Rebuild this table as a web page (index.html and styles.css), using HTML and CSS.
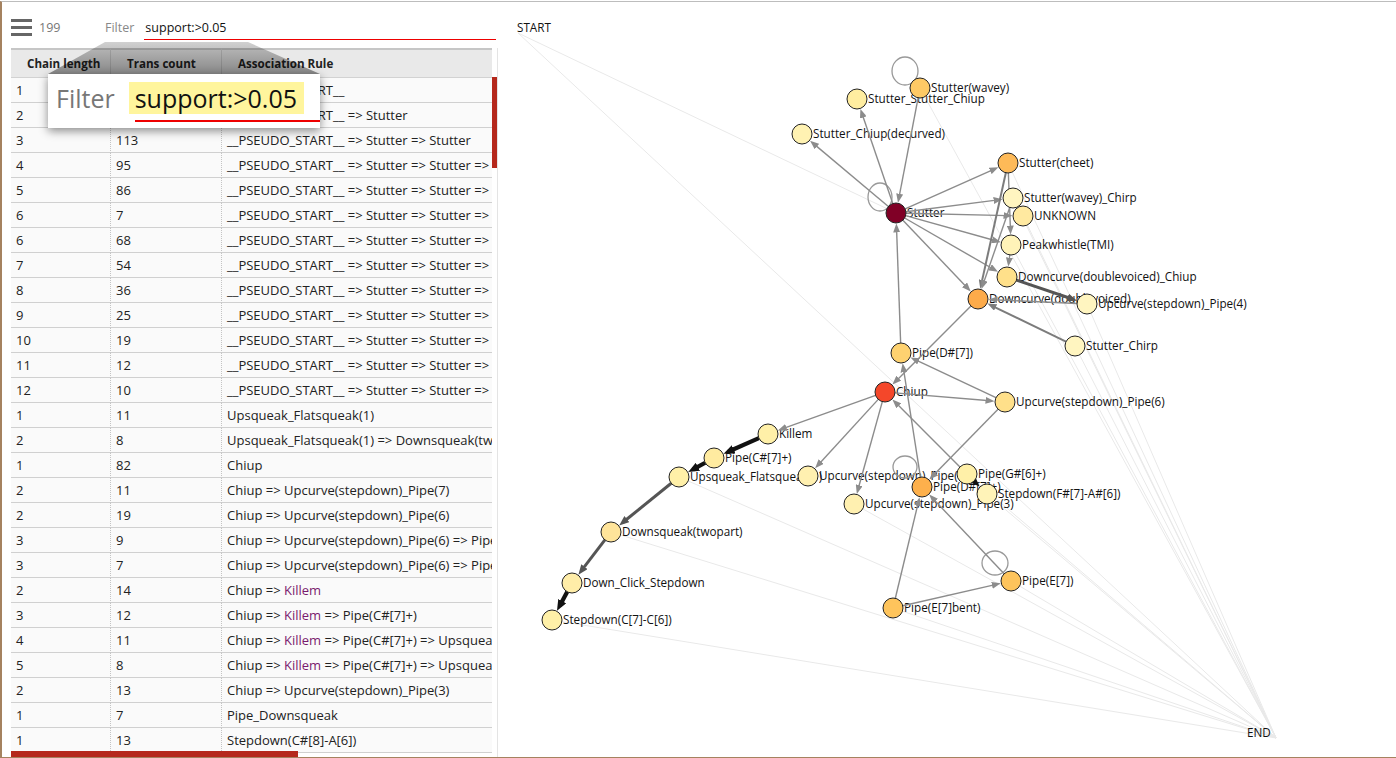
FILE: index.html
```html
<!DOCTYPE html>
<html>
<head>
<meta charset="utf-8">
<title>Association rules</title>
<link rel="stylesheet" href="styles.css">
</head>
<body>
<div class="app">
  <aside class="panel">
    <div class="toolbar">
      <span class="menu-icon"><i></i><i></i><i></i></span>
      <span class="count">199</span>
      <span class="filter-label">Filter</span>
      <span class="filter-input">support:&gt;0.05</span>
    </div>
    <div class="table-wrap">
      <table class="rules">
        <colgroup><col class="c1"><col class="c2"><col class="c3"></colgroup>
        <thead>
          <tr><th>Chain length</th><th>Trans count</th><th>Association Rule</th></tr>
        </thead>
        <tbody>
          <tr><td>1</td><td>199</td><td>__PSEUDO_START__</td></tr>
          <tr><td>2</td><td>150</td><td>__PSEUDO_START__ =&gt; Stutter</td></tr>
          <tr><td>3</td><td>113</td><td>__PSEUDO_START__ =&gt; Stutter =&gt; Stutter</td></tr>
          <tr><td>4</td><td>95</td><td>__PSEUDO_START__ =&gt; Stutter =&gt; Stutter =&gt; Stutter</td></tr>
          <tr><td>5</td><td>86</td><td>__PSEUDO_START__ =&gt; Stutter =&gt; Stutter =&gt; Stutter</td></tr>
          <tr><td>6</td><td>7</td><td>__PSEUDO_START__ =&gt; Stutter =&gt; Stutter =&gt; Stutter</td></tr>
          <tr><td>6</td><td>68</td><td>__PSEUDO_START__ =&gt; Stutter =&gt; Stutter =&gt; Stutter</td></tr>
          <tr><td>7</td><td>54</td><td>__PSEUDO_START__ =&gt; Stutter =&gt; Stutter =&gt; Stutter</td></tr>
          <tr><td>8</td><td>36</td><td>__PSEUDO_START__ =&gt; Stutter =&gt; Stutter =&gt; Stutter</td></tr>
          <tr><td>9</td><td>25</td><td>__PSEUDO_START__ =&gt; Stutter =&gt; Stutter =&gt; Stutter</td></tr>
          <tr><td>10</td><td>19</td><td>__PSEUDO_START__ =&gt; Stutter =&gt; Stutter =&gt; Stutter</td></tr>
          <tr><td>11</td><td>12</td><td>__PSEUDO_START__ =&gt; Stutter =&gt; Stutter =&gt; Stutter</td></tr>
          <tr><td>12</td><td>10</td><td>__PSEUDO_START__ =&gt; Stutter =&gt; Stutter =&gt; Stutter</td></tr>
          <tr><td>1</td><td>11</td><td>Upsqueak_Flatsqueak(1)</td></tr>
          <tr><td>2</td><td>8</td><td>Upsqueak_Flatsqueak(1) =&gt; Downsqueak(twopart)</td></tr>
          <tr><td>1</td><td>82</td><td>Chiup</td></tr>
          <tr><td>2</td><td>11</td><td>Chiup =&gt; Upcurve(stepdown)_Pipe(7)</td></tr>
          <tr><td>2</td><td>19</td><td>Chiup =&gt; Upcurve(stepdown)_Pipe(6)</td></tr>
          <tr><td>3</td><td>9</td><td>Chiup =&gt; Upcurve(stepdown)_Pipe(6) =&gt; Pipe(D#[7])</td></tr>
          <tr><td>3</td><td>7</td><td>Chiup =&gt; Upcurve(stepdown)_Pipe(6) =&gt; Pipe(D#[7]+)</td></tr>
          <tr><td>2</td><td>14</td><td>Chiup =&gt; <span class="seen">Killem</span></td></tr>
          <tr><td>3</td><td>12</td><td>Chiup =&gt; <span class="seen">Killem</span> =&gt; Pipe(C#[7]+)</td></tr>
          <tr><td>4</td><td>11</td><td>Chiup =&gt; <span class="seen">Killem</span> =&gt; Pipe(C#[7]+) =&gt; Upsqueak_Flatsqueak(1)</td></tr>
          <tr><td>5</td><td>8</td><td>Chiup =&gt; <span class="seen">Killem</span> =&gt; Pipe(C#[7]+) =&gt; Upsqueak_Flatsqueak(1)</td></tr>
          <tr><td>2</td><td>13</td><td>Chiup =&gt; Upcurve(stepdown)_Pipe(3)</td></tr>
          <tr><td>1</td><td>7</td><td>Pipe_Downsqueak</td></tr>
          <tr><td>1</td><td>13</td><td>Stepdown(C#[8]-A[6])</td></tr>
        </tbody>
      </table>
      <div class="vthumb"></div>
      <div class="hthumb"></div>
    </div>
    <div class="lens-cone"></div>
    <div class="lens">
      <span class="lens-label">Filter</span>
      <span class="lens-value">support:&gt;0.05</span>
      <span class="lens-line"></span>
    </div>
  </aside>
  <svg id="graph" class="graph" viewBox="498 2 898 755" xmlns="http://www.w3.org/2000/svg"></svg>
</div>
<script src="graph.js"></script>
</body>
</html>
```

FILE: styles.css
```css
html, body {
  margin: 0;
  padding: 0;
  background: #fff;
}
body {
  padding-top: 1px;
  font-family: "Open Sans", "Noto Sans", sans-serif;
  color: #222;
}
.app {
  display: flex;
  height: 757px;
  box-sizing: border-box;
  border-top: 1px solid #bdbdbd;
  border-left: 2px solid #a5825f;
  border-bottom: 1px solid #a5825f;
  overflow: hidden;
}
.panel {
  position: relative;
  width: 496px;
  flex: none;
  display: flex;
  flex-direction: column;
}
.toolbar {
  display: flex;
  align-items: center;
  height: 46px;
  box-sizing: border-box;
  padding: 4px 0 0 9px;
  flex: none;
}
.menu-icon {
  width: 21px;
  height: 17px;
  display: flex;
  flex-direction: column;
  justify-content: space-between;
}
.menu-icon i {
  display: block;
  height: 3px;
  background: #666;
}
.count {
  width: 73px;
  box-sizing: border-box;
  padding-left: 7px;
  font-size: 12.5px;
  color: #777;
}
.filter-label {
  font-size: 12.5px;
  color: #888;
  margin-right: 10px;
}
.filter-input {
  flex: 1;
  font-size: 12.5px;
  color: #111;
  border-bottom: 1px solid #e00;
  margin-right: 2px;
  padding: 4px 0 3px 1px;
}
.table-wrap {
  position: relative;
  flex: 1;
  margin-left: 9px;
  overflow: hidden;
  border-right: 1px solid #e4e4e4;
}
.rules {
  border-collapse: separate;
  border-spacing: 0;
  table-layout: fixed;
  width: 481px;
  font-size: 13px;
}
col.c1 { width: 99px; }
col.c2 { width: 111px; }
col.c3 { width: 271px; }
.rules th {
  background: #e9e9e9;
  border-top: 2px solid #c6c6c6;
  border-bottom: 1px solid #d2d2d2;
  text-align: left;
  padding: 0 0 0 16px;
  line-height: 27px;
  font-size: 11.6px;
  font-weight: bold;
  color: #222;
  white-space: nowrap;
  overflow: hidden;
}
.rules th + th {
  border-left: 1px solid #cfcfcf;
}
.rules td {
  background: #fafafa;
  border-bottom: 1px solid #d0d0d0;
  padding: 0 0 0 5px;
  line-height: 24px;
  white-space: nowrap;
  overflow: hidden;
  color: #222;
}
.rules td + td {
  border-left: 1px dotted #c4c4c4;
}
.seen {
  color: #7a1a6e;
}
.vthumb {
  position: absolute;
  right: 0;
  top: 29px;
  width: 5px;
  height: 91px;
  background: #b5281c;
}
.hthumb {
  position: absolute;
  left: 0;
  bottom: 0;
  width: 287px;
  height: 6px;
  background: #b5281c;
}
.lens-cone {
  position: absolute;
  left: 46px;
  top: 40px;
  width: 272px;
  height: 32px;
  clip-path: polygon(57px 0, 200px 0, 100% 100%, 0 100%);
  background: linear-gradient(rgba(0,0,0,0.18), rgba(0,0,0,0.42));
}
.lens {
  position: absolute;
  left: 46px;
  top: 72px;
  width: 272px;
  height: 54px;
  box-sizing: border-box;
  padding-left: 8px;
  background: #fff;
  box-shadow: 0 3px 9px rgba(0,0,0,0.45);
  display: flex;
  align-items: center;
}
.lens-label {
  font-size: 25px;
  color: #777;
  margin-right: 14px;
  margin-bottom: 7px;
}
.lens-value {
  font-size: 25px;
  color: #111;
  background: #fff59d;
  padding: 0 7px 0 6px;
  line-height: 32px;
  margin-bottom: 7px;
}
.lens-line {
  position: absolute;
  left: 87px;
  top: 46px;
  width: 185px;
  height: 2px;
  background: #e00;
}
.graph {
  flex: 1;
  height: 755px;
  display: block;
}
```

FILE: graph.js
```js
(function () {
  var NS = 'http://www.w3.org/2000/svg';
  var svg = document.getElementById('graph');
  function el(tag, a, p) {
    var e = document.createElementNS(NS, tag);
    for (var k in a) e.setAttribute(k, a[k]);
    (p || svg).appendChild(e);
    return e;
  }
  var N = {
    scd: [802, 134, '#fff2b2', 'Stutter_Chiup(decurved)'],
    ssc: [857, 99, '#ffeda0', 'Stutter_Stutter_Chiup'],
    sw: [920, 88, '#fec965', 'Stutter(wavey)'],
    st: [896, 213, '#800026', 'Stutter'],
    sc: [1008, 163, '#feba58', 'Stutter(cheet)'],
    swc: [1013, 198, '#fff5c0', 'Stutter(wavey)_Chirp'],
    unk: [1023, 216, '#ffe9a0', 'UNKNOWN'],
    pw: [1011, 245, '#fff3b8', 'Peakwhistle(TMI)'],
    ddc: [1007, 277, '#ffe08a', 'Downcurve(doublevoiced)_Chiup'],
    dd: [978, 299, '#fdab4a', 'Downcurve(doublevoiced)'],
    up4: [1087, 304, '#fff5c0', 'Upcurve(stepdown)_Pipe(4)'],
    sch: [1075, 346, '#fff5c0', 'Stutter_Chirp'],
    pd7: [901, 353, '#fed270', 'Pipe(D#[7])'],
    ch: [885, 392, '#f4472a', 'Chiup'],
    up6: [1005, 402, '#ffe08a', 'Upcurve(stepdown)_Pipe(6)'],
    ki: [768, 434, '#fff0a8', 'Killem'],
    pc7: [714, 458, '#ffeba0', 'Pipe(C#[7]+)'],
    uf: [679, 477, '#fff0a8', 'Upsqueak_Flatsqueak(1)'],
    up7: [808, 476, '#fff0b0', 'Upcurve(stepdown)_Pipe(7)'],
    up3: [854, 504, '#fff0b0', 'Upcurve(stepdown)_Pipe(3)'],
    pd7p: [922, 487, '#fdb04c', 'Pipe(D#[7]+)'],
    pg6: [967, 474, '#fff0a8', 'Pipe(G#[6]+)'],
    sfa: [987, 494, '#fff3b8', 'Stepdown(F#[7]-A#[6])'],
    ds: [611, 532, '#ffe49a', 'Downsqueak(twopart)'],
    dcs: [572, 583, '#ffeda8', 'Down_Click_Stepdown'],
    scc: [552, 620, '#fff0a8', 'Stepdown(C[7]-C[6])'],
    pe7: [1011, 581, '#fec45c', 'Pipe(E[7])'],
    peb: [893, 608, '#fec45c', 'Pipe(E[7]bent)']
  };
  var order = ['scd', 'ssc', 'sw', 'st', 'sc', 'swc', 'unk', 'pw', 'ddc', 'dd', 'up4', 'sch', 'pd7', 'ch', 'up6',
    'ki', 'pc7', 'uf', 'up7', 'up3', 'pd7p', 'pg6', 'sfa', 'ds', 'dcs', 'scc', 'pe7', 'peb'];
  var START = [518, 33], END = [1276, 738];
  var styles = {
    g: ['#8c8c8c', 1.4, 9, 7],
    g2: ['#7c7c7c', 2, 9, 7],
    d: ['#555555', 3, 10, 8],
    k: ['#111111', 4.2, 11, 9],
    k2: ['#111111', 2, 9, 7]
  };
  var defs = el('defs', {});
  Object.keys(styles).forEach(function (s) {
    var st = styles[s];
    var m = el('marker', {
      id: 'a-' + s, markerWidth: st[2], markerHeight: st[3], refX: st[2] / 2, refY: st[3] / 2,
      orient: 'auto', markerUnits: 'userSpaceOnUse'
    }, defs);
    el('path', { d: 'M0,0L' + st[2] + ',' + (st[3] / 2) + 'L0,' + st[3] + 'z', fill: st[0] }, m);
  });

  var faint = el('g', { stroke: '#e9e9e9', 'stroke-width': 1, fill: 'none' });
  function fl(a, b) { el('line', { x1: a[0], y1: a[1], x2: b[0], y2: b[1] }, faint); }
  fl(START, END);
  fl(START, N.st);
  ['scc', 'ds', 'uf', 'sw', 'sc', 'swc', 'unk', 'pw', 'sch', 'up4', 'pe7', 'peb', 'sfa', 'up3', 'pg6']
    .forEach(function (k) { fl(N[k], END); });

  var labels = el('g', { 'font-family': '"Open Sans","Noto Sans",sans-serif', 'font-size': '11.7', fill: '#111' });
  order.forEach(function (k) {
    var n = N[k];
    var t = el('text', { x: n[0] + 11, y: n[1] + 4 }, labels);
    t.textContent = n[3];
  });
  var t1 = el('text', { x: 517, y: 32 }, labels); t1.textContent = 'START';
  var t2 = el('text', { x: 1247, y: 737 }, labels); t2.textContent = 'END';

  var loops = el('g', { stroke: '#999', 'stroke-width': 1.3, fill: 'none' });
  [[905, 71, 13, 14], [880, 197, 12, 14], [905, 467, 12, 11], [995, 563, 13, 12]].forEach(function (l) {
    el('ellipse', { cx: l[0], cy: l[1], rx: l[2], ry: l[3] }, loops);
  });

  var edges = [
    ['st', 'scd', 'g'], ['st', 'ssc', 'g'], ['sw', 'st', 'g'], ['st', 'sc', 'g'], ['st', 'swc', 'g'],
    ['st', 'unk', 'g'], ['st', 'pw', 'g'], ['st', 'ddc', 'g'], ['st', 'dd', 'g'],
    ['sc', 'dd', 'g2'], ['swc', 'dd', 'g'], ['sc', 'pw', 'g'], ['pw', 'ddc', 'g'],
    ['ddc', 'up4', 'd'], ['up4', 'dd', 'g'], ['sch', 'dd', 'g2'], ['dd', 'ch', 'g'],
    ['pd7', 'st', 'g'], ['pd7p', 'pd7', 'g'], ['up6', 'pd7', 'g'], ['ch', 'up6', 'g'],
    ['ch', 'ki', 'g'], ['ch', 'up7', 'g'], ['ch', 'up3', 'g'], ['pg6', 'ch', 'g'],
    ['up6', 'pd7p', 'g'], ['pe7', 'pd7p', 'g'], ['peb', 'pd7p', 'g'], ['peb', 'pe7', 'g'],
    ['pg6', 'sfa', 'k2'], ['ki', 'pc7', 'k'], ['pc7', 'uf', 'k'], ['uf', 'ds', 'd'],
    ['ds', 'dcs', 'd'], ['dcs', 'scc', 'k']
  ];
  var eg = el('g', { fill: 'none' });
  edges.forEach(function (e) {
    var a = N[e[0]], b = N[e[1]], st = styles[e[2]];
    var dx = b[0] - a[0], dy = b[1] - a[1], L = Math.sqrt(dx * dx + dy * dy), ux = dx / L, uy = dy / L;
    var tip = 10.5, back = st[2] / 2;
    el('line', {
      x1: a[0] + ux * 10, y1: a[1] + uy * 10,
      x2: b[0] - ux * (tip + back), y2: b[1] - uy * (tip + back),
      stroke: st[0], 'stroke-width': st[1], 'marker-end': 'url(#a-' + e[2] + ')'
    }, eg);
  });

  var cg = el('g', { stroke: '#222', 'stroke-width': 1 });
  order.forEach(function (k) {
    var n = N[k];
    el('circle', { cx: n[0], cy: n[1], r: 10, fill: n[2] }, cg);
  });
})();
```
